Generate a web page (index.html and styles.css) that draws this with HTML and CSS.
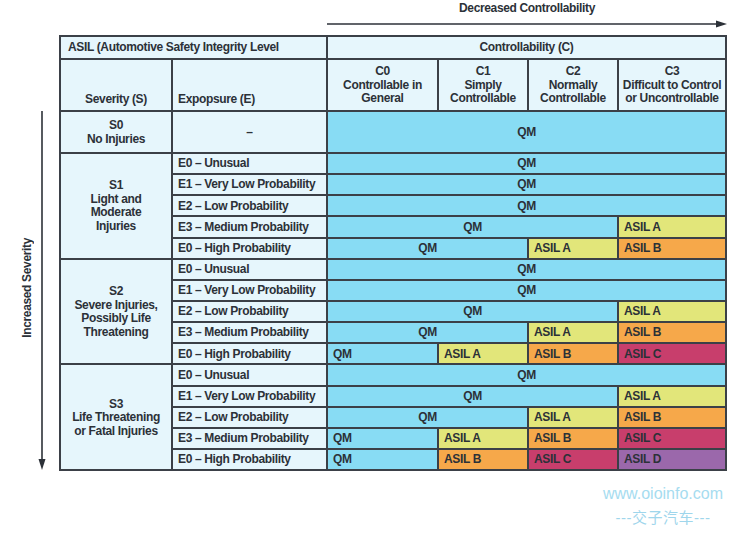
FILE: index.html
```html
<!DOCTYPE html>
<html lang="en">
<head>
<meta charset="utf-8">
<title>ASIL Determination Table</title>
<link rel="stylesheet" href="styles.css">
</head>
<body>
<div class="page">
  <div class="top">
    <div class="top-label">Decreased Controllability</div>
    <svg class="harrow" width="400" height="8" viewBox="0 0 400 8">
      <line x1="0" y1="4" x2="390" y2="4" stroke="#2c3138" stroke-width="1.6"/>
      <polygon points="389,0.5 400,4 389,7.5" fill="#2c3138"/>
    </svg>
  </div>
  <div class="main">
    <div class="side">
      <div class="side-label">Increased Severity</div>
      <svg class="varrow" width="8" height="359" viewBox="0 0 8 359">
        <line x1="4" y1="0" x2="4" y2="349" stroke="#2c3138" stroke-width="1.6"/>
        <polygon points="0.5,348 7.5,348 4,359" fill="#2c3138"/>
      </svg>
    </div>
    <div class="grid">
      <div class="cell span2 asil-title">ASIL (Automotive Safety Integrity Level</div>
      <div class="cell span4 center">Controllability (C)</div>

      <div class="cell center bottom">Severity (S)</div>
      <div class="cell bottom">Expopsure (E)</div>
      <div class="cell center multi">C0<br>Controllable in<br>General</div>
      <div class="cell center multi">C1<br>Simply<br>Controllable</div>
      <div class="cell center multi">C2<br>Normally<br>Controllable</div>
      <div class="cell center multi">C3<br>Difficult to Control<br>or Uncontrollable</div>

      <div class="cell center multi">S0<br>No Injuries</div>
      <div class="cell center">–</div>
      <div class="cell span4 center qm">QM</div>

      <div class="cell center multi sev">S1<br>Light and<br>Moderate<br>Injuries</div>
      <div class="cell exp">E0 – Unusual</div>
      <div class="cell span4 center qm">QM</div>
      <div class="cell exp">E1 – Very Low Probability</div>
      <div class="cell span4 center qm">QM</div>
      <div class="cell exp">E2 – Low Probability</div>
      <div class="cell span4 center qm">QM</div>
      <div class="cell exp">E3 – Medium Probability</div>
      <div class="cell span3 center qm">QM</div>
      <div class="cell a">ASIL A</div>
      <div class="cell exp">E0 – High Probability</div>
      <div class="cell span2 center qm">QM</div>
      <div class="cell a">ASIL A</div>
      <div class="cell b">ASIL B</div>

      <div class="cell center multi sev">S2<br>Severe Injuries,<br>Possibly Life<br>Threatening</div>
      <div class="cell exp">E0 – Unusual</div>
      <div class="cell span4 center qm">QM</div>
      <div class="cell exp">E1 – Very Low Probability</div>
      <div class="cell span4 center qm">QM</div>
      <div class="cell exp">E2 – Low Probability</div>
      <div class="cell span3 center qm">QM</div>
      <div class="cell a">ASIL A</div>
      <div class="cell exp">E3 – Medium Probability</div>
      <div class="cell span2 center qm">QM</div>
      <div class="cell a">ASIL A</div>
      <div class="cell b">ASIL B</div>
      <div class="cell exp">E0 – High Probability</div>
      <div class="cell qm">QM</div>
      <div class="cell a">ASIL A</div>
      <div class="cell b">ASIL B</div>
      <div class="cell c">ASIL C</div>

      <div class="cell center multi sev">S3<br>Life Threatening<br>or Fatal Injuries</div>
      <div class="cell exp">E0 – Unusual</div>
      <div class="cell span4 center qm">QM</div>
      <div class="cell exp">E1 – Very Low Probability</div>
      <div class="cell span3 center qm">QM</div>
      <div class="cell a">ASIL A</div>
      <div class="cell exp">E2 – Low Probability</div>
      <div class="cell span2 center qm">QM</div>
      <div class="cell a">ASIL A</div>
      <div class="cell b">ASIL B</div>
      <div class="cell exp">E3 – Medium Probability</div>
      <div class="cell qm">QM</div>
      <div class="cell a">ASIL A</div>
      <div class="cell b">ASIL B</div>
      <div class="cell c">ASIL C</div>
      <div class="cell exp">E0 – High Probability</div>
      <div class="cell qm">QM</div>
      <div class="cell b">ASIL B</div>
      <div class="cell c">ASIL C</div>
      <div class="cell d">ASIL D</div>
    </div>
  </div>
  <div class="watermark">
    <div class="wm-url">www.oioinfo.com</div>
    <div class="wm-cn">---交子汽车---</div>
  </div>
</div>
</body>
</html>
```

FILE: styles.css
```css
* { box-sizing: border-box; }
html, body { margin: 0; padding: 0; background: #ffffff; }
body {
  font-family: "Liberation Sans", Arial, sans-serif;
  font-weight: 700;
  font-size: 12px;
  letter-spacing: -0.35px;
  color: #2c3138;
}
.page { width: 740px; height: 536px; }

.top {
  margin-left: 327px;
  width: 400px;
  height: 35px;
  padding-top: 1px;
}
.top-label {
  height: 14px;
  line-height: 14px;
  text-align: center;
}
.harrow { display: block; margin-top: 5px; }

.main { display: flex; align-items: flex-start; }
.side {
  width: 59px;
  display: flex;
  align-items: center;
  padding-top: 76px;
  padding-left: 21px;
  gap: 4px;
}
.side-label {
  writing-mode: vertical-rl;
  transform: rotate(180deg);
  width: 13px;
  line-height: 13px;
  white-space: nowrap;
  margin-top: -6px;
}
.varrow { display: block; }

.grid {
  display: grid;
  grid-template-columns: 110px 153px 109px 88px 88px 106px;
  grid-template-rows: 21px 50px 40px repeat(15, 19.15px);
  gap: 2px;
  padding: 2px;
  background: #3b4047;
}
.cell {
  background: #e6f6fc;
  display: flex;
  align-items: center;
  padding: 1px 5px 0;
  white-space: nowrap;
  line-height: 13.5px;
}
.asil-title { padding-left: 7px; }
.center { justify-content: center; text-align: center; }
.bottom { align-items: flex-end; padding-bottom: 4px; }
.exp { grid-column: 2; }
.sev { grid-column: 1; grid-row: span 5; }
.span2 { grid-column: span 2; }
.span3 { grid-column: span 3; }
.span4 { grid-column: span 4; }
.qm { background: #88dcf4; }
.a { background: #e2e67a; }
.b { background: #f6a84a; }
.c { background: #c83e6c; }
.d { background: #9b68ab; }

.watermark {
  margin-left: 593px;
  width: 140px;
  margin-top: 12px;
  text-align: center;
  font-weight: 400;
  letter-spacing: 0;
}
.wm-url {
  font-size: 16px;
  line-height: 22px;
  color: #a6dcf0;
}
.wm-cn {
  margin-top: 2px;
  font-family: "Liberation Sans", "Noto Sans CJK SC", sans-serif;
  font-size: 15px;
  line-height: 22px;
  letter-spacing: 0.5px;
  color: #9fd6ec;
}
```
